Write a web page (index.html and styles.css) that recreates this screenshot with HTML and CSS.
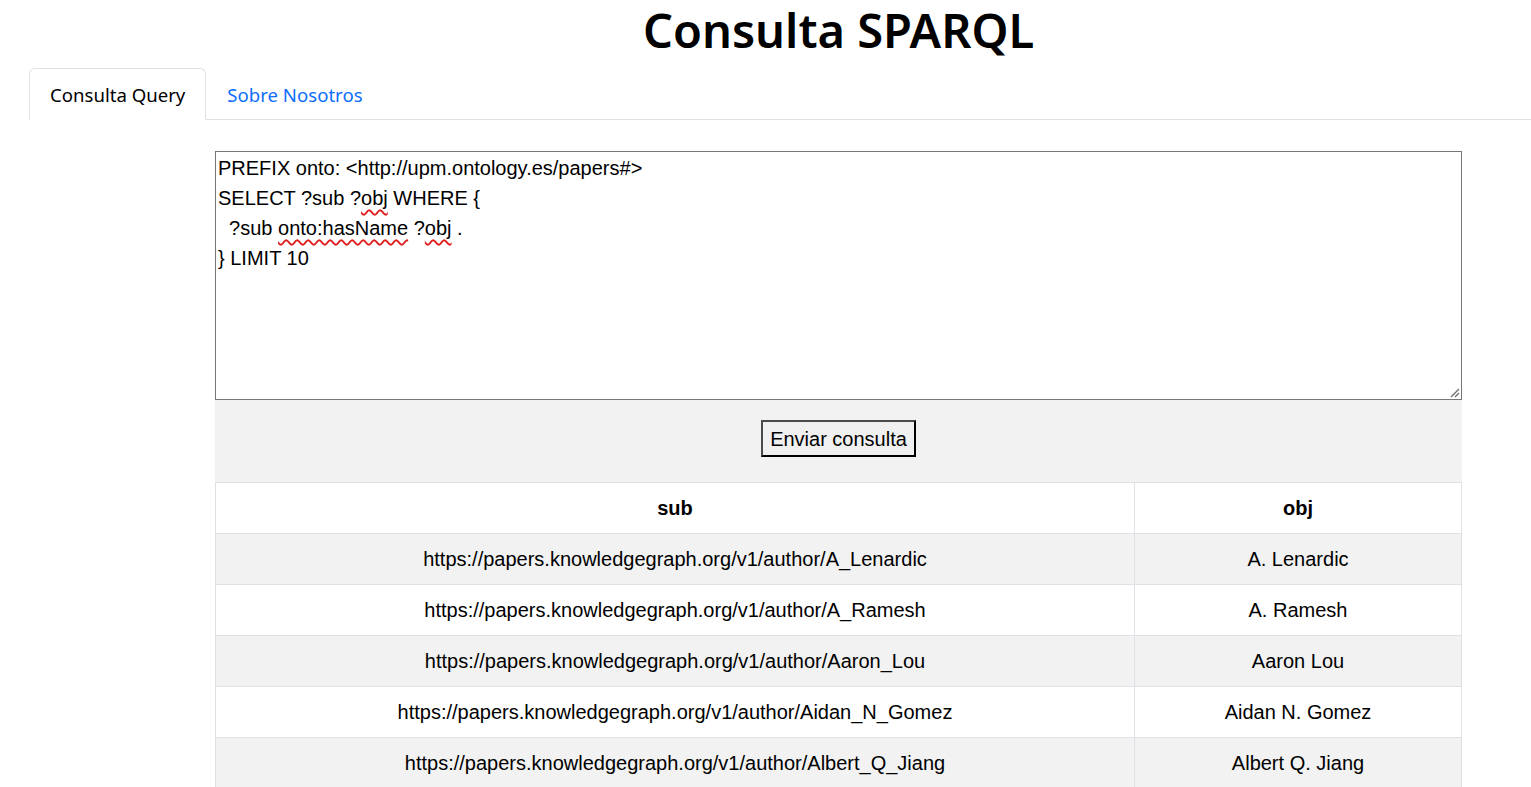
FILE: index.html
```html
<!DOCTYPE html>
<html lang="es">
<head>
<meta charset="utf-8">
<title>Consulta SPARQL</title>
<link rel="stylesheet" href="styles.css">
</head>
<body>
<header class="head">
  <h1 class="title">Consulta SPARQL</h1>
</header>
<nav class="tabs">
  <a class="tab active">Consulta Query</a>
  <a class="tab">Sobre Nosotros</a>
</nav>
<main class="main">
  <form class="form">
    <div class="editor">
      <div class="code">PREFIX onto: &lt;http://upm.ontology.es/papers#&gt;
SELECT ?sub ?<span class="sp">obj</span> WHERE {
  ?sub <span class="sp">onto:hasName</span> ?<span class="sp">obj</span> .
} LIMIT 10</div>
      <svg class="grip" width="12" height="12" viewBox="0 0 12 12"><path d="M11 3 L3 11 M11 7 L7 11" stroke="#6b6b6b" stroke-width="1.3" fill="none"/></svg>
    </div>
    <div class="actions">
      <button type="button" class="btn">Enviar consulta</button>
    </div>
  </form>
  <table class="results">
    <thead>
      <tr><th class="c-sub">sub</th><th class="c-obj">obj</th></tr>
    </thead>
    <tbody>
      <tr><td>https://papers.knowledgegraph.org/v1/author/A_Lenardic</td><td>A. Lenardic</td></tr>
      <tr><td>https://papers.knowledgegraph.org/v1/author/A_Ramesh</td><td>A. Ramesh</td></tr>
      <tr><td>https://papers.knowledgegraph.org/v1/author/Aaron_Lou</td><td>Aaron Lou</td></tr>
      <tr><td>https://papers.knowledgegraph.org/v1/author/Aidan_N_Gomez</td><td>Aidan N. Gomez</td></tr>
      <tr><td>https://papers.knowledgegraph.org/v1/author/Albert_Q_Jiang</td><td>Albert Q. Jiang</td></tr>
      <tr><td>https://papers.knowledgegraph.org/v1/author/Alec_Radford</td><td>Alec Radford</td></tr>
      <tr><td>https://papers.knowledgegraph.org/v1/author/Alexander_Kolesnikov</td><td>Alexander Kolesnikov</td></tr>
      <tr><td>https://papers.knowledgegraph.org/v1/author/Alexey_Dosovitskiy</td><td>Alexey Dosovitskiy</td></tr>
      <tr><td>https://papers.knowledgegraph.org/v1/author/Ali_Ghodsi</td><td>Ali Ghodsi</td></tr>
      <tr><td>https://papers.knowledgegraph.org/v1/author/Amanda_Askell</td><td>Amanda Askell</td></tr>
    </tbody>
  </table>
</main>
</body>
</html>
```

FILE: styles.css
```css
html, body {
  margin: 0;
  padding: 0;
  background: #fff;
  color: #000;
}
body {
  font-family: "Noto Sans", "Open Sans", sans-serif;
}
.head {
  padding-left: 215px;
  width: 1247px;
}
.title {
  margin: 0;
  height: 60px;
  font-size: 47px;
  font-weight: 600;
  line-height: 60px;
  text-align: center;
  color: #000;
}
.tabs {
  display: flex;
  margin: 8px 0 0 29px;
  border-bottom: 1px solid #dee2e6;
  height: 51px;
}
.tab {
  display: block;
  padding: 1px 20px 0;
  font-size: 18.6px;
  line-height: 50px;
  color: #0d6efd;
  border: 1px solid transparent;
  border-top-left-radius: 6px;
  border-top-right-radius: 6px;
  margin-bottom: -1px;
  cursor: pointer;
}
.tab.active {
  color: #000;
  background: #fff;
  border-color: #dee2e6 #dee2e6 #fff;
}
.main {
  margin: 31px 0 0 215px;
  width: 1247px;
}
.form {
  background: #f2f2f2;
}
.editor {
  position: relative;
  box-sizing: border-box;
  height: 249px;
  border: 1px solid #767676;
  background: #fff;
}
.code {
  padding: 1px 2px;
  font-family: "Liberation Sans", Arial, sans-serif;
  font-size: 20px;
  line-height: 30px;
  white-space: pre;
  color: #000;
}
.sp {
  text-decoration: underline wavy #e02020;
  text-decoration-thickness: 1.5px;
  text-underline-offset: 4px;
}
.grip {
  position: absolute;
  right: 1px;
  bottom: 1px;
}
.actions {
  display: flex;
  justify-content: center;
  padding: 20px 0 25px;
}
.btn {
  font-family: "Liberation Sans", Arial, sans-serif;
  font-size: 20px;
  line-height: 23px;
  padding: 6px 7px 4px;
  background: #f0f0f0;
  color: #000;
  border: 2px solid;
  border-color: #4a4a4a #000 #000 #4a4a4a;
  border-radius: 0;
}
.results {
  width: 1247px;
  border-collapse: collapse;
  font-family: "Liberation Sans", Arial, sans-serif;
  font-size: 20px;
}
.results th,
.results td {
  border: 1px solid #dee2e6;
  height: 50px;
  padding: 0 8px;
  text-align: center;
  vertical-align: middle;
  line-height: 24px;
}
.results th {
  font-weight: bold;
}
.c-sub { width: 902px; }
.results tbody tr:nth-child(odd) td {
  background: #f2f2f2;
}
```
